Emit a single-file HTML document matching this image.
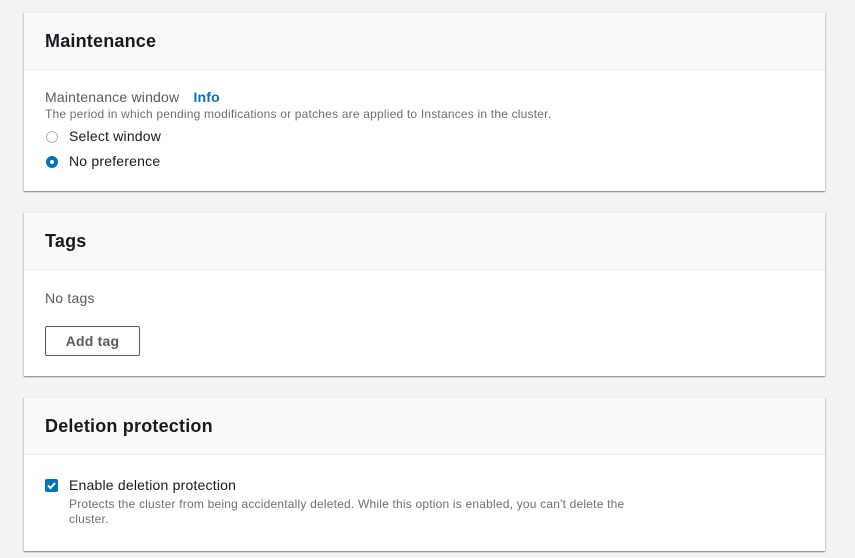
<!DOCTYPE html>
<html><head><style>
body{margin:0;background:#f2f3f3;font-family:"Liberation Sans",sans-serif;color:#16191f;width:855px;height:558px;overflow:hidden;position:relative}
.card{position:absolute;left:24px;width:801px;background:#fff;border-top:1px solid #eaeded;box-shadow:0 1px 1px 0 rgba(0,28,36,.3),1px 1px 1px 0 rgba(0,28,36,.15),-1px 1px 1px 0 rgba(0,28,36,.15)}
.hd{background:#fafafa;border-bottom:1px solid #eaeded;height:57px;box-sizing:border-box;padding:18px 21px 0;font-size:18px;font-weight:bold;letter-spacing:.2px}
.bd{padding:0 21px;position:relative}
.lbl{font-size:14px;color:#545b64;letter-spacing:.2px}
.desc{font-size:12px;color:#687078;letter-spacing:.2px}
.opt{font-size:14px;position:absolute;left:45px;letter-spacing:.2px}
.radio{position:absolute;left:22px;width:12px;height:12px;border-radius:50%;box-sizing:border-box}
.btn{position:absolute;left:21px;width:95px;height:30px;box-sizing:border-box;border:1px solid #545b64;border-radius:2px;font-size:14px;font-weight:bold;color:#545b64;text-align:center;line-height:28px;letter-spacing:.2px}
</style></head><body>
<div class="card" style="top:12px;height:178px">
 <div class="hd">Maintenance</div>
 <div class="bd">
  <div class="lbl" style="position:absolute;top:19px;left:21px">Maintenance window <b style="color:#0073bb;margin-left:10px">Info</b></div>
  <div class="desc" style="position:absolute;top:37px;left:21px">The period in which pending modifications or patches are applied to Instances in the cluster.</div>
  <div class="radio" style="top:61px;border:1px solid #aab7b8"></div>
  <div class="opt" style="top:58px">Select window</div>
  <div class="radio" style="top:86px;border:4px solid #0073bb"></div>
  <div class="opt" style="top:83px">No preference</div>
 </div>
</div>
<div class="card" style="top:212px;height:163px">
 <div class="hd">Tags</div>
 <div class="bd">
  <div class="lbl" style="position:absolute;top:20px;left:21px">No tags</div>
  <div class="btn" style="top:56px">Add tag</div>
 </div>
</div>
<div class="card" style="top:397px;height:153px">
 <div class="hd">Deletion protection</div>
 <div class="bd">
  <div style="position:absolute;left:21px;top:24px;width:13px;height:13px;background:#0073bb;border-radius:2px">
   <svg width="13" height="13" viewBox="0 0 13 13"><path d="M3 6.5l2.5 2.5 4.5-5" stroke="#fff" stroke-width="2" fill="none"/></svg>
  </div>
  <div class="opt" style="top:22px">Enable deletion protection</div>
  <div class="desc" style="position:absolute;left:45px;top:42px;width:570px;line-height:15px">Protects the cluster from being accidentally deleted. While this option is enabled, you can't delete the cluster.</div>
 </div>
</div>
</body></html>
